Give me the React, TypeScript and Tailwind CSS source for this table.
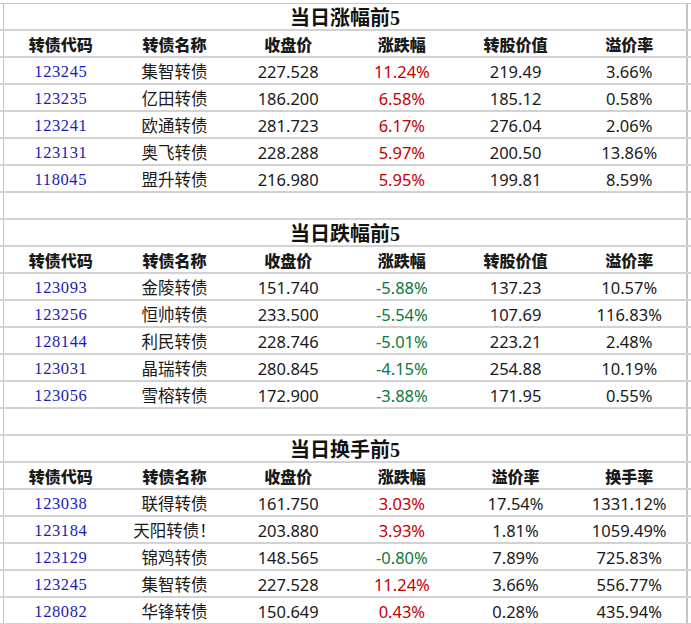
import type { ReactNode } from "react";

type Section = {
  title: string;
  headers: string[];
  rows: string[][];
};

const SECTIONS: Section[] = [
  {
    title: "当日涨幅前5",
    headers: ["转债代码", "转债名称", "收盘价", "涨跌幅", "转股价值", "溢价率"],
    rows: [
      ["123245", "集智转债", "227.528", "11.24%", "219.49", "3.66%"],
      ["123235", "亿田转债", "186.200", "6.58%", "185.12", "0.58%"],
      ["123241", "欧通转债", "281.723", "6.17%", "276.04", "2.06%"],
      ["123131", "奥飞转债", "228.288", "5.97%", "200.50", "13.86%"],
      ["118045", "盟升转债", "216.980", "5.95%", "199.81", "8.59%"],
    ],
  },
  {
    title: "当日跌幅前5",
    headers: ["转债代码", "转债名称", "收盘价", "涨跌幅", "转股价值", "溢价率"],
    rows: [
      ["123093", "金陵转债", "151.740", "-5.88%", "137.23", "10.57%"],
      ["123256", "恒帅转债", "233.500", "-5.54%", "107.69", "116.83%"],
      ["128144", "利民转债", "228.746", "-5.01%", "223.21", "2.48%"],
      ["123031", "晶瑞转债", "280.845", "-4.15%", "254.88", "10.19%"],
      ["123056", "雪榕转债", "172.900", "-3.88%", "171.95", "0.55%"],
    ],
  },
  {
    title: "当日换手前5",
    headers: ["转债代码", "转债名称", "收盘价", "涨跌幅", "溢价率", "换手率"],
    rows: [
      ["123038", "联得转债", "161.750", "3.03%", "17.54%", "1331.12%"],
      ["123184", "天阳转债！", "203.880", "3.93%", "1.81%", "1059.49%"],
      ["123129", "锦鸡转债", "148.565", "-0.80%", "7.89%", "725.83%"],
      ["123245", "集智转债", "227.528", "11.24%", "3.66%", "556.77%"],
      ["128082", "华锋转债", "150.649", "0.43%", "0.28%", "435.94%"],
    ],
  },
];

// one spreadsheet row: gridline below, table border left/right
function Row({ children }: { children?: ReactNode }) {
  return (
    <div className="flex h-[27px] box-border border-b-2 border-[#d2d2d2]">
      <div className="w-[3px] shrink-0" />
      <div className="flex w-[685px] shrink-0 box-border border-l border-r-2 border-[#c4c4c4]">
        {children}
      </div>
      <div className="flex-1" />
    </div>
  );
}

function Cell({ children, className = "" }: { children: ReactNode; className?: string }) {
  return (
    <div className={`flex flex-1 items-center justify-center pt-[3px] whitespace-nowrap ${className}`}>
      {children}
    </div>
  );
}

function SectionTable({ section }: { section: Section }) {
  return (
    <>
      <Row>
        <div className="flex flex-1 items-end justify-center pb-[1px] font-['Liberation_Serif','Noto_Sans_CJK_SC',serif] text-[20px] font-bold leading-none text-[#111]">
          {section.title}
        </div>
      </Row>
      <Row>
        {section.headers.map((h, i) => (
          <Cell key={i} className="text-[16px] font-black text-[#1a1a1a]">
            {h}
          </Cell>
        ))}
      </Row>
      {section.rows.map((r, ri) => (
        <Row key={ri}>
          <Cell className="font-['Liberation_Serif',serif] text-[16.5px] tracking-[0.6px] text-[#1a1ab8]">{r[0]}</Cell>
          <Cell className="text-[16.5px] text-[#1a1a1a]">{r[1]}</Cell>
          <Cell className="text-[16.5px] text-[#1a1a1a]">{r[2]}</Cell>
          <Cell className={`text-[16.5px] ${r[3].startsWith("-") ? "text-[#0b7a3a]" : "text-[#c40000]"}`}>
            {r[3]}
          </Cell>
          <Cell className="text-[16.5px] text-[#1a1a1a]">{r[4]}</Cell>
          <Cell className="text-[16.5px] text-[#1a1a1a]">{r[5]}</Cell>
        </Row>
      ))}
    </>
  );
}

export default function App() {
  return (
    <div className="h-[624px] w-[691px] overflow-hidden bg-white font-['Noto_Sans','Noto_Sans_CJK_SC',sans-serif]">
      <div className="h-[4px] box-border border-b border-[#c4c4c4]" />
      {SECTIONS.map((s, i) => (
        <div key={i}>
          {i > 0 && <Row />}
          <SectionTable section={s} />
        </div>
      ))}
    </div>
  );
}
